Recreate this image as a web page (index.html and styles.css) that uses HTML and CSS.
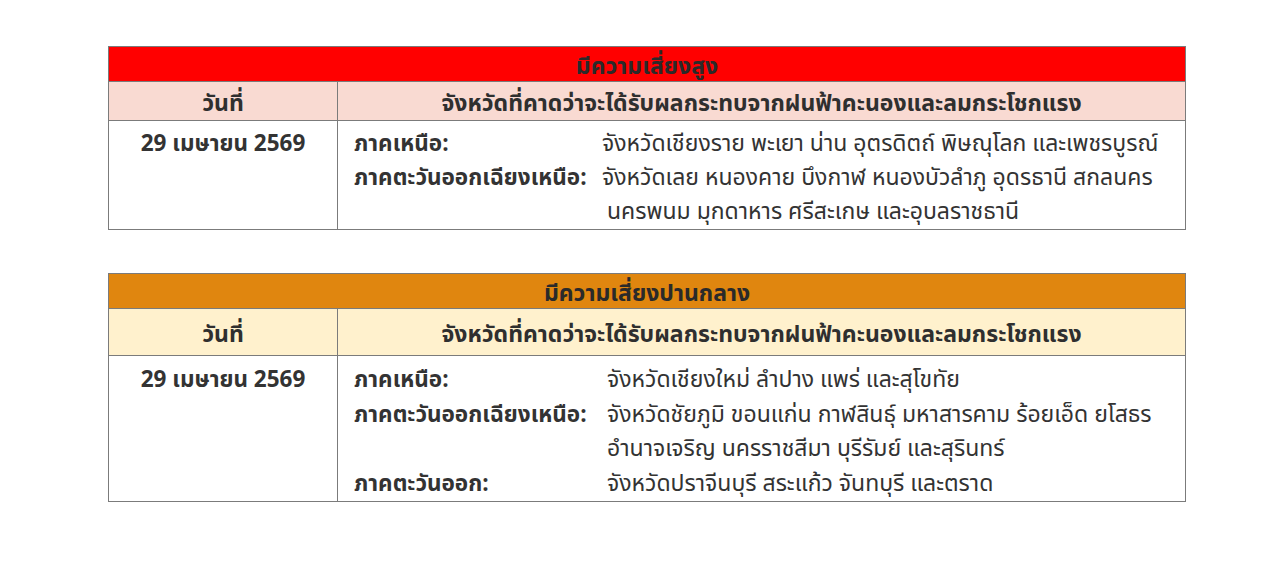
FILE: index.html
```html
<!DOCTYPE html>
<html lang="th">
<head>
<meta charset="utf-8">
<link rel="stylesheet" href="styles.css">
</head>
<body>
<div class="page">
  <table class="risk high">
    <tr><th class="title" colspan="2">มีความเสี่ยงสูง</th></tr>
    <tr class="head"><th class="c1">วันที่</th><th>จังหวัดที่คาดว่าจะได้รับผลกระทบจากฝนฟ้าคะนองและลมกระโชกแรง</th></tr>
    <tr class="body">
      <td class="date">29 เมษายน 2569</td>
      <td>
        <div class="regions">
          <div class="lab">ภาคเหนือ:</div><div class="val">จังหวัดเชียงราย พะเยา น่าน อุตรดิตถ์ พิษณุโลก และเพชรบูรณ์</div>
          <div class="lab">ภาคตะวันออกเฉียงเหนือ:</div><div class="val">จังหวัดเลย หนองคาย บึงกาฬ หนองบัวลำภู อุดรธานี สกลนคร<br><span class="cont">นครพนม มุกดาหาร ศรีสะเกษ และอุบลราชธานี</span></div>
        </div>
      </td>
    </tr>
  </table>

  <table class="risk mid">
    <tr><th class="title" colspan="2">มีความเสี่ยงปานกลาง</th></tr>
    <tr class="head"><th class="c1">วันที่</th><th>จังหวัดที่คาดว่าจะได้รับผลกระทบจากฝนฟ้าคะนองและลมกระโชกแรง</th></tr>
    <tr class="body">
      <td class="date">29 เมษายน 2569</td>
      <td>
        <div class="regions">
          <div class="lab">ภาคเหนือ:</div><div class="val">จังหวัดเชียงใหม่ ลำปาง แพร่ และสุโขทัย</div>
          <div class="lab">ภาคตะวันออกเฉียงเหนือ:</div><div class="val">จังหวัดชัยภูมิ ขอนแก่น กาฬสินธุ์ มหาสารคาม ร้อยเอ็ด ยโสธร<br>อำนาจเจริญ นครราชสีมา บุรีรัมย์ และสุรินทร์</div>
          <div class="lab">ภาคตะวันออก:</div><div class="val">จังหวัดปราจีนบุรี สระแก้ว จันทบุรี และตราด</div>
        </div>
      </td>
    </tr>
  </table>
</div>
</body>
</html>
```

FILE: styles.css
```css
html, body {
  margin: 0;
  padding: 0;
  background: #ffffff;
}
.page {
  padding: 46px 0 0 108px;
  font-family: "Noto Sans Thai", "Noto Sans", "DejaVu Sans", sans-serif;
  color: #333333;
}
.risk {
  width: 1078px;
  border-collapse: collapse;
  margin-bottom: 43px;
  font-size: 23px;
}
.risk th, .risk td {
  border: 1.5px solid #7b7b7b;
  padding: 0;
}
.risk .title {
  height: 35px;
  font-weight: bold;
  text-align: center;
  color: #2a2a2a;
  line-height: 28px;
  padding-top: 6px;
  box-sizing: border-box;
}
.risk .head th {
  font-weight: bold;
  text-align: center;
  color: #2f2f2f;
  line-height: 28px;
  padding-top: 5px;
  box-sizing: border-box;
}
.risk .c1 {
  width: 229px;
}
.high .title { background: #ff0000; }
.high .head th { background: #f9dad2; height: 39px; }
.mid .title { background: #e0860f; }
.mid .head th { background: #fff1cd; height: 47px; }
.risk .body td {
  vertical-align: top;
  line-height: 34px;
  padding-top: 6px;
}
.mid .body td {
  line-height: 34.5px;
  padding-top: 7px;
}
.risk .date {
  text-align: center;
  font-weight: bold;
  font-size: 22.5px;
}
.regions {
  display: grid;
  grid-template-columns: 245px 1fr;
  padding-left: 16px;
}
.lab {
  font-weight: bold;
  white-space: nowrap;
  font-size: 22.5px;
}
.val {
  padding-left: 3px;
  white-space: nowrap;
}
.mid .val {
  padding-left: 8px;
}
.cont {
  padding-left: 5px;
}
```
